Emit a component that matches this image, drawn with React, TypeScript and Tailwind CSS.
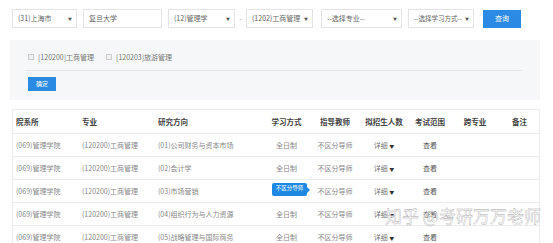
import React from 'react';

const rows = [
  { dir: '(01)公司财务与资本市场' },
  { dir: '(02)会计学' },
  { dir: '(03)市场营销', tip: true },
  { dir: '(04)组织行为与人力资源' },
  { dir: '(05)战略管理与国际商务' },
];

const cols = 'grid grid-cols-[66px_76px_108px_47px_50px_48px_44px_46px_43px]';

const Select = ({ label, w }: { label: string; w: string }) => (
  <div className={`${w} h-[19px] border border-[#e4e4e4] bg-white flex items-center justify-between pl-[5px] pr-[4px] text-[#666] whitespace-nowrap`}>
    <span>{label}</span>
    <span className="text-[4px] text-[#555]">▼</span>
  </div>
);

const App = () => {
  return (
    <div className="relative w-[553px] h-[243px] overflow-hidden bg-white text-[7px] leading-none font-['Noto_Sans_CJK_SC','Noto_Sans',sans-serif]">
      {/* 筛选条件 */}
      <div className="flex items-center pt-[9px] pl-[12px]">
        <Select label="(31)上海市" w="w-[65px]" />
        <div className="ml-[6px] w-[79px] h-[19px] border border-[#e4e4e4] flex items-center pl-[5px] text-[#666]">复旦大学</div>
        <div className="ml-[6px]">
          <Select label="(12)管理学" w="w-[67px]" />
        </div>
        <span className="w-[11px] text-center text-[#999]">-</span>
        <Select label="(1202)工商管理" w="w-[67px]" />
        <div className="ml-[8px]">
          <Select label="--选择专业--" w="w-[81px]" />
        </div>
        <div className="ml-[6px] text-[6.5px]">
          <Select label="--选择学习方式--" w="w-[66px]" />
        </div>
        <button className="ml-[9px] w-[38px] h-[18px] bg-[#2b8ae3] text-white text-[7px]">查询</button>
      </div>

      {/* 专业勾选 */}
      <div className="mt-[12px] ml-[10px] w-[530px] h-[60px] bg-[#f6f7f9] flex flex-col">
        <div className="flex items-center h-[30px] pl-[18px] pt-[4px] text-[#777]">
          <span className="w-[6px] h-[6px] border border-[#ccc] bg-[#f0f0f0]" />
          <span className="ml-[4px]">[120200]工商管理</span>
          <span className="ml-[12px] w-[6px] h-[6px] border border-[#ccc] bg-[#f0f0f0]" />
          <span className="ml-[4px]">[120203]旅游管理</span>
        </div>
        <div className="ml-[15px] w-[497px] h-px bg-[#e6e7ea]" />
        <button className="mt-[6px] ml-[18px] w-[28px] h-[14px] bg-[#2b8ae3] text-white text-[6px]">确定</button>
      </div>

      {/* 结果表格 */}
      <div className="mt-[9px] ml-[12px] w-[528px] border border-[#ececec]">
        <div className={`${cols} h-[23px] items-center text-[7.5px] font-bold text-[#444]`}>
          <span className="pl-[3px]">院系所</span>
          <span className="pl-[3px]">专业</span>
          <span className="pl-[3px]">研究方向</span>
          <span className="text-center">学习方式</span>
          <span className="text-center">指导教师</span>
          <span className="text-center">拟招生人数</span>
          <span className="text-center">考试范围</span>
          <span className="text-center">跨专业</span>
          <span className="text-center">备注</span>
        </div>
        {rows.map((r, i) => (
          <div key={i} className={`${cols} h-[23px] items-center border-t border-[#ececec] text-[#888]`}>
            <span className="pl-[3px]">(069)管理学院</span>
            <span className="pl-[3px]">(120200)工商管理</span>
            <span className="pl-[3px]">{r.dir}</span>
            <span className="relative text-center">
              全日制
              {r.tip && (
                <span className="absolute left-[9px] top-[-5px] w-[35px] h-[13px] rounded-[2px] bg-[#1e88e5] text-white text-[5.5px] flex items-center justify-center">
                  不区分导师
                  <span className="absolute right-[-3px] top-[4px] w-0 h-0 border-y-[3px] border-y-transparent border-l-[3px] border-l-[#1e88e5]" />
                </span>
              )}
            </span>
            <span className="text-center">不区分导师</span>
            <span className="text-center text-[#777]">
              详细 <span className="text-[5px] text-[#333]">▼</span>
            </span>
            <span className="text-center text-[#555]">查看</span>
            <span />
            <span />
          </div>
        ))}
      </div>

      {/* 水印 */}
      <div className="absolute left-[385px] top-[207px] text-[17px] text-white/90 [-webkit-text-stroke:0.35px_#a8a8a8] whitespace-nowrap">
        知乎 @考研万万老师
      </div>
    </div>
  );
};

export default App;
